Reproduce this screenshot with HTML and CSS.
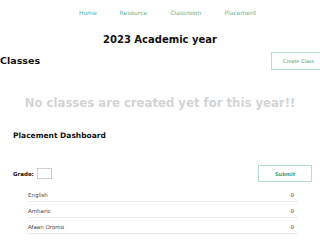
FILE: index.html
```html
<!DOCTYPE html>
<html>
<head>
<meta charset="utf-8">
<link rel="stylesheet" href="styles.css">
</head>
<body>
<nav class="nav">
  <a class="nav-link">Home</a>
  <a class="nav-link">Resource</a>
  <a class="nav-link">Classroom</a>
  <a class="nav-link">Placement</a>
</nav>
<h1 class="year">2023 Academic year</h1>
<div class="classes-head">
  <h2 class="classes-title">Classes</h2>
  <button class="btn create">Create Class</button>
</div>
<p class="empty">No classes are created yet for this year!!</p>
<h3 class="dash-title">Placement Dashboard</h3>
<div class="grade-row">
  <label class="grade-label">Grade: <span class="grade-input"></span></label>
  <button class="btn submit">Submit</button>
</div>
<ul class="subjects">
  <li class="subject"><span>English</span><span>0</span></li>
  <li class="subject"><span>Amharic</span><span>0</span></li>
  <li class="subject"><span>Afaan Oromo</span><span>0</span></li>
</ul>
</body>
</html>
```
FILE: styles.css
```css
html, body { margin: 0; padding: 0; }
body {
  width: 320px;
  height: 240px;
  overflow: hidden;
  background: #fff;
  font-family: "DejaVu Sans", sans-serif;
  color: #111;
}
.nav {
  display: flex;
  justify-content: center;
  align-items: center;
  gap: 23px;
  padding: 0 0 0 15px;
  height: 26px;
}
.nav-link {
  font-size: 6px;
  line-height: 8px;
  color: #5cb69c;
}
.year {
  margin: 8px 0 0;
  text-align: center;
  font-size: 10px;
  font-weight: bold;
  line-height: 12px;
}
.classes-head {
  display: flex;
  justify-content: space-between;
  align-items: center;
  margin-top: 6px;
  width: 329px;
}
.classes-title {
  margin: 0;
  font-size: 9.5px;
  line-height: 12px;
  font-weight: bold;
}
.btn {
  background: #fff;
  border: 1px solid #b3dfd1;
  color: #3a9a7d;
  font-family: inherit;
  padding: 0;
}
.create {
  width: 58px;
  height: 18px;
  font-size: 5px;
  padding-right: 3px;
}
.empty {
  margin: 26px 0 0;
  text-align: center;
  font-size: 11.7px;
  font-weight: bold;
  color: #d4d4d4;
  line-height: 14px;
}
.dash-title {
  margin: 21px 0 0 13px;
  font-size: 7.5px;
  line-height: 10px;
  font-weight: bold;
}
.grade-row {
  display: flex;
  justify-content: space-between;
  align-items: center;
  margin: 24px 8px 0 13px;
}
.grade-label {
  display: flex;
  align-items: center;
  gap: 3px;
  font-size: 5.5px;
  font-weight: bold;
}
.grade-input {
  display: inline-block;
  width: 13px;
  height: 9px;
  border: 1px solid #cfcfcf;
}
.submit {
  width: 54px;
  height: 17px;
  font-size: 5px;
  font-weight: bold;
}
.subjects {
  list-style: none;
  margin: 7px 22px 0 27px;
  padding: 0;
  display: flex;
  flex-direction: column;
  gap: 4px;
}
.subject {
  display: flex;
  justify-content: space-between;
  align-items: center;
  height: 12px;
  padding: 0 4px 0 1px;
  font-size: 5.5px;
  color: #444;
  box-shadow: 0 1px 1px rgba(0,0,0,0.06), 0 0 1px rgba(0,0,0,0.08);
}
```
